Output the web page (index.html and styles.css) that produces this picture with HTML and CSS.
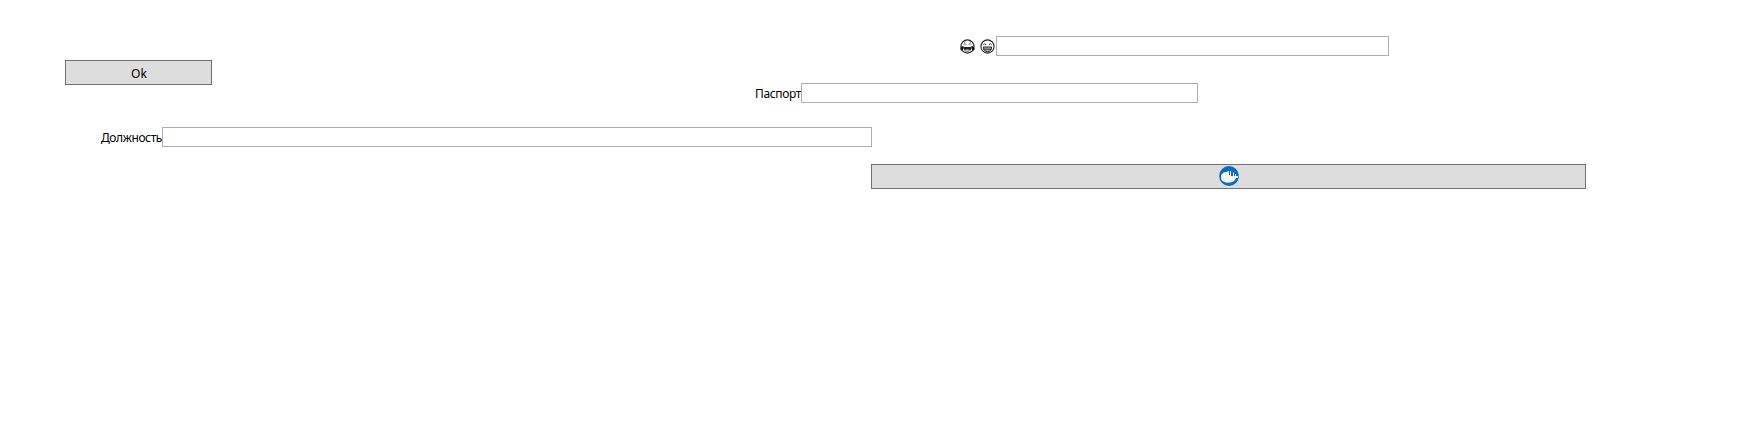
FILE: index.html
```html
<!DOCTYPE html>
<html lang="ru">
<head>
<meta charset="utf-8">
<title>Form</title>
<link rel="stylesheet" href="styles.css">
</head>
<body>
<main class="form">
  <div class="top">
    <button class="button button-ok"><span>Ok</span></button>
    <div class="fields">
      <div class="field field-emoji">
        <span class="faces">
          <svg class="face" viewBox="0 0 15 15" aria-hidden="true">
            <circle cx="7.5" cy="7.5" r="6.6" fill="#fff" stroke="#222" stroke-width="1.1"/>
            <path d="M3.400 5.800 5 4.600l1.500 1.200M8.500 5.800 10 4.600l1.600 1.200M4 3.300l1.600-.5M9.400 2.800l1.600.5" fill="none" stroke="#444" stroke-width=".8"/>
            <path d="M3.600 8h7.800c0 2.900-1.500 4.800-3.900 4.800S3.600 10.900 3.600 8Z" fill="#222"/>
            <path d="M4.800 11.300q2.700-2 5.400 0-1 1.300-2.700 1.300t-2.700-1.300Z" fill="#bbb"/>
            <path d="M.4 9.700C.4 8 2 7 3.700 7c.2 2-.5 4.500-2 4.500-.8 0-1.300-.7-1.300-1.800ZM14.600 9.700c0-1.700-1.600-2.700-3.300-2.700-.2 2 .5 4.500 2 4.500.8 0 1.300-.7 1.300-1.800Z" fill="#111"/>
          </svg>
          <svg class="face" viewBox="0 0 15 15" aria-hidden="true">
            <circle cx="7.500" cy="7.500" r="6.600" fill="#fff" stroke="#222" stroke-width="1.100"/>
            <path d="M3.300 5.800q1.300-2 2.700 0M9 5.800q1.300-2 2.700 0" fill="none" stroke="#333" stroke-width="1"/>
            <path d="M3.400 8h8.200c0 2.900-1.600 4.600-4.100 4.600S3.400 10.900 3.400 8Z" fill="#bbb" stroke="#222" stroke-width="1"/>
            <path d="M3.700 10.200h7.600" stroke="#333" stroke-width="1"/>
          </svg>
        </span>
        <input class="input" type="text">
      </div>
      <label class="field field-passport"><span class="label">Паспорт</span><input class="input" type="text"></label>
    </div>
  </div>
  <label class="field field-position"><span class="label">Должность</span><input class="input" type="text"></label>
  <button class="button button-docker" aria-label="Docker">
    <svg class="docker" viewBox="0 0 20 20" aria-hidden="true">
      <circle cx="10" cy="10" r="9.900" fill="#0b6bc4"/>
      <path d="M2 10.500V9l2-2 2-1h2.500V5H10v4h1V5h1v5h2V6.500h1V10h1V8h1v2h2v2h-2c-1 2.800-3.200 4.300-6.400 4.600-4 .4-7-.7-8.200-2.800Z" fill="#f4f4f4"/>
    </svg>
  </button>
</main>
</body>
</html>
```
FILE: styles.css
```css
body {
  margin: 0;
  background: #fff;
  color: #000;
  font: 12px/16px "Noto Sans", "Open Sans", sans-serif;
}

.form {
  display: flex;
  flex-direction: column;
  align-items: flex-start;
  box-sizing: border-box;
  width: 1759px;
  height: 441px;
  padding-top: 36px;
}

.top {
  display: flex;
  align-items: flex-start;
}

.fields {
  display: flex;
  flex-direction: column;
  gap: 27px;
  margin-left: 542px;
}

.field {
  display: flex;
  align-items: center;
  height: 20px;
}

.label {
  flex: none;
  padding-top: 2px;
  white-space: nowrap;
}

.input {
  box-sizing: border-box;
  flex: 1;
  min-width: 0;
  height: 20px;
  margin: 0;
  padding: 0 2px;
  border: 1px solid #abadb3;
  border-radius: 0;
  background: #fff;
  font: inherit;
  outline: none;
}

.button {
  display: flex;
  align-items: center;
  justify-content: center;
  box-sizing: border-box;
  height: 25px;
  padding: 0;
  border: 1px solid #707070;
  border-radius: 0;
  background: #ddd;
  color: #000;
  font: inherit;
}

.button-ok {
  width: 147px;
  margin: 24px 0 0 65px;
}

.button-ok span {
  padding: 2px 0 0 1px;
}

.button-docker {
  width: 715px;
  margin: 17px 0 0 871px;
}

.field-emoji {
  width: 429px;
  margin-left: 206px;
}

.faces {
  display: flex;
  flex: none;
  gap: 5px;
  box-sizing: border-box;
  width: 36px;
  padding: 1px 0 0 0;
}

.face {
  flex: none;
  width: 15px;
  height: 15px;
}

.field-passport {
  width: 444px;
}

.field-passport .label {
  box-sizing: border-box;
  width: 47px;
  padding-left: 1px;
  letter-spacing: -0.35px;
}

.field-position {
  width: 771px;
  margin: 24px 0 0 101px;
}

.field-position .label {
  width: 61px;
  letter-spacing: -0.4px;
}

.docker {
  display: block;
  width: 20px;
  height: 20px;
  margin-bottom: 1px;
}
```
